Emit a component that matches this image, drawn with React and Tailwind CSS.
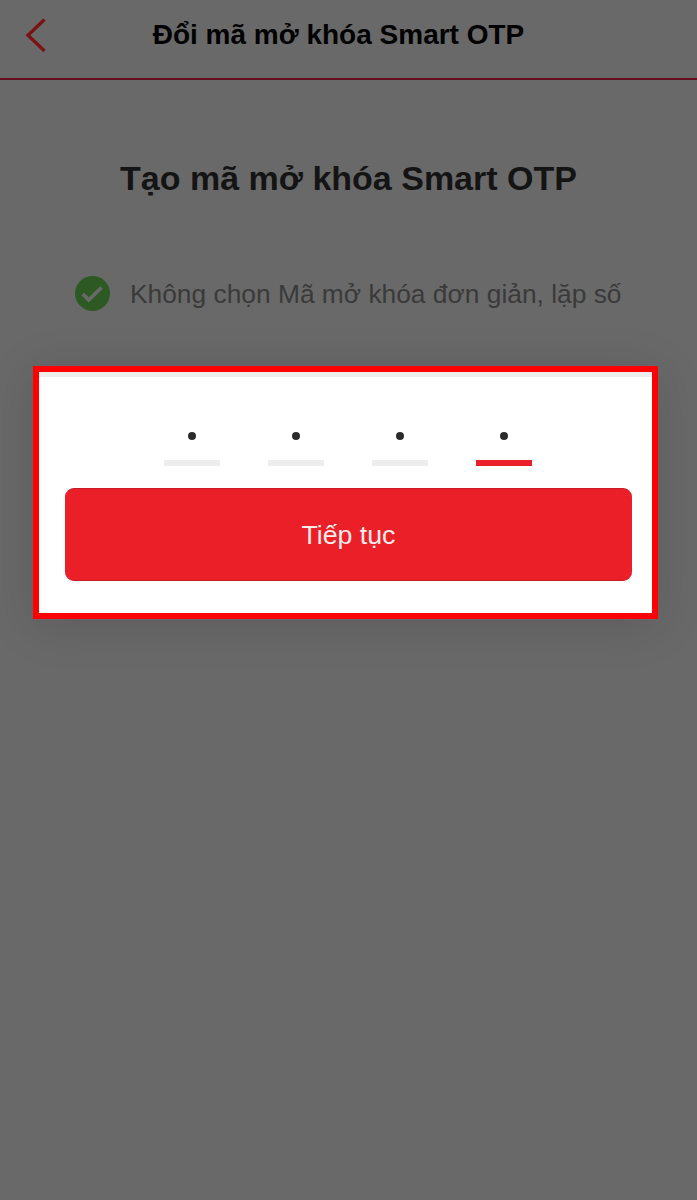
const PIN_LENGTH = 4;

export default function App() {
  return (
    <div className="flex h-[1200px] w-[697px] flex-col overflow-hidden bg-[#696969] font-['Liberation_Sans',Arial,sans-serif]">
      <Header title="Đổi mã mở khóa Smart OTP" />

      <h2 className="mt-[78px] text-center text-[34px] leading-10 font-bold whitespace-nowrap text-[#141414]">
        Tạo mã mở khóa Smart OTP
      </h2>

      {/* Rule for the new code */}
      <div className="mt-[78px] ml-[75px] flex h-[35px] items-center gap-5">
        <CheckIcon />
        <p className="pt-0.5 text-[26.35px] leading-[35px] whitespace-nowrap text-[#3a3a3a]">
          Không chọn Mã mở khóa đơn giản, lặp số
        </p>
      </div>

      <PinPanel filled={PIN_LENGTH} />
    </div>
  );
}

function Header({ title }) {
  return (
    <header className="grid h-20 shrink-0 grid-cols-[80px_1fr_100px] items-start border-b-2 border-[#650f20]">
      <button className="mt-[18px] ml-[25px] w-[22px]" aria-label="Back">
        <svg width="22" height="35" viewBox="0 0 22 35" fill="none" stroke="#7b1216" strokeWidth="3.3">
          <path d="M19.5 1.5L3 17.3l16.5 15.7" />
        </svg>
      </button>
      <h1 className="mt-[15px] text-center text-[28px] leading-10 font-bold whitespace-nowrap text-black">{title}</h1>
    </header>
  );
}

function PinPanel({ filled }) {
  return (
    <section className="mt-[55px] ml-[33px] h-[253px] w-[625px] shrink-0 border-6 border-[#fe0000] bg-white shadow-[0_6px_45px_rgba(0,0,0,0.13)]">
      <div className="h-[5px] bg-[#ededeb]" />
      <div className="mt-[55px] ml-[125.4px] flex gap-12">
        {Array.from({ length: PIN_LENGTH }, (_, i) => (
          <div key={i} className="flex w-14 flex-col items-center">
            <span className="size-2 rounded-full bg-[#2b2b2b]" />
            <span className={`mt-5 h-1.5 w-full ${i === filled - 1 ? 'bg-[#eb1f28]' : 'bg-[#ededed]'}`} />
          </div>
        ))}
      </div>
      <button className="mt-[22px] ml-[26px] flex h-[93px] w-[567px] items-center justify-center rounded-[9px] border-y border-[#c91b25] bg-[#eb1f28] pt-0.5 text-[26.7px] text-[#ffecec]">
        Tiếp tục
      </button>
    </section>
  );
}

function CheckIcon() {
  return (
    <svg width="35" height="35" viewBox="0 0 35 35" fill="none">
      <circle cx="17.5" cy="17.5" r="17.5" fill="#2c5a22" />
      <path d="M7.8 18l5.9 6L26.5 11.5" stroke="#696969" strokeWidth="3.7" />
    </svg>
  );
}
